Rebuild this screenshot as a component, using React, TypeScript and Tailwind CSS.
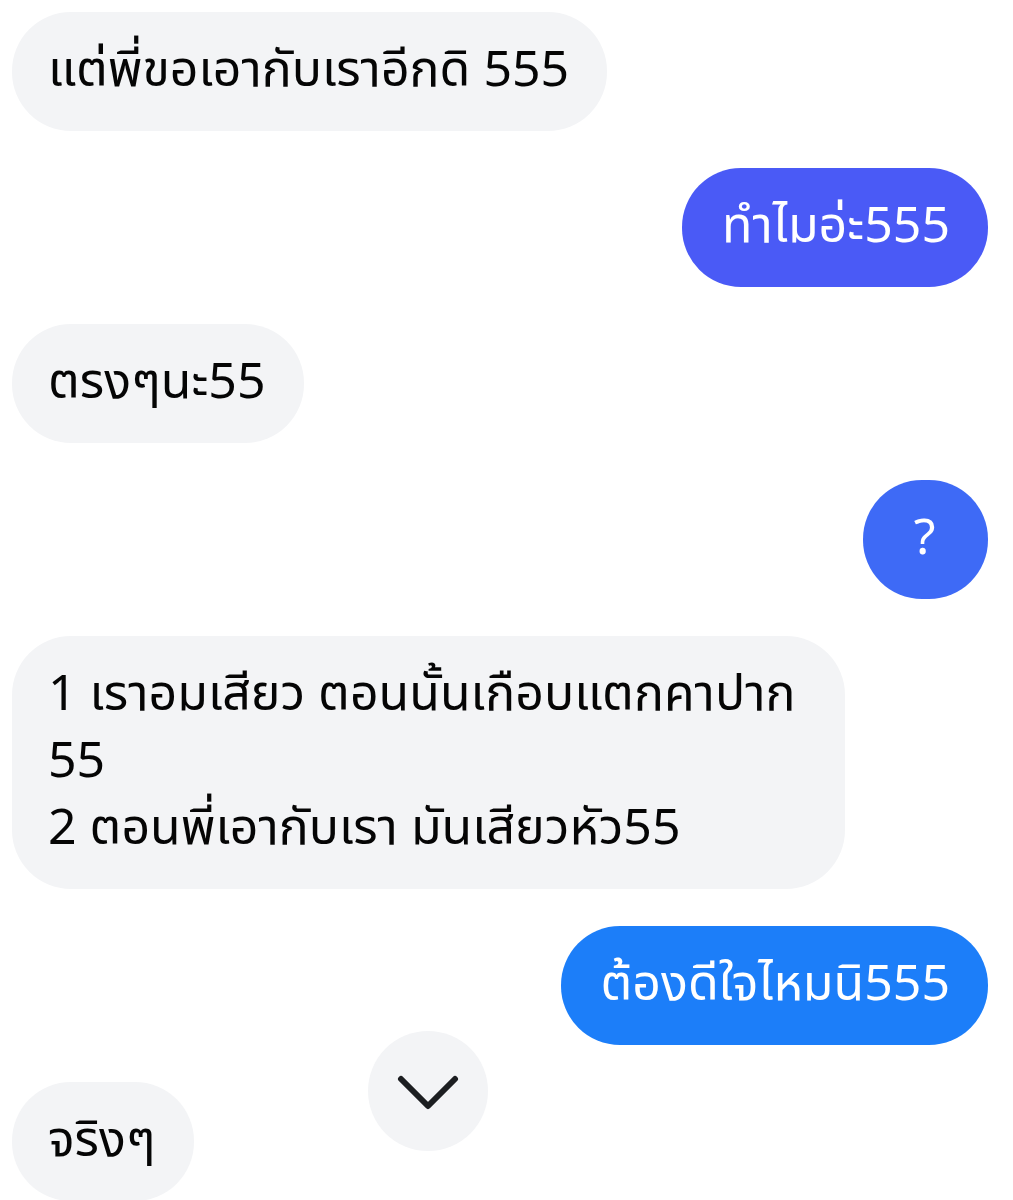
import React from "react";

type Msg = { id: number; me: boolean; lines: string[]; color?: string; extra?: string };

const messages: Msg[] = [
  { id: 1, me: false, lines: ["แต่พี่ขอเอากับเราอีกดิ 555"] },
  { id: 2, me: true, lines: ["ทำไมอ่ะ555"], color: "bg-[#4a5af6]", extra: "pl-[40px]" },
  { id: 3, me: false, lines: ["ตรงๆนะ55"] },
  { id: 4, me: true, lines: ["?"], color: "bg-[#3e6af6]", extra: "w-[125px] items-center text-[44px]" },
  {
    id: 5,
    me: false,
    lines: ["1 เราอมเสียว ตอนนั้นเกือบแตกคาปาก", "55", "2 ตอนพี่เอากับเรา มันเสียวหัว55"],
    extra: "pr-[50px]",
  },
  { id: 6, me: true, lines: ["ต้องดีใจไหมนิ555"], color: "bg-[#1c7ef9]", extra: "pl-[40px]" },
  { id: 7, me: false, lines: ["จริงๆ"] },
];

function Bubble({ m }: { m: Msg }) {
  return (
    <div className={m.me ? "flex justify-end pr-[25px]" : "flex justify-start pl-[12px]"}>
      <div
        className={
          "flex flex-col whitespace-nowrap rounded-[59px] py-[26px] pl-[36px] pr-[38px] text-[50px] leading-[67px] " +
          (m.me ? `${m.color} text-white ` : "bg-[#f3f4f6] text-[#050505] ") +
          (m.extra ?? "")
        }
      >
        {m.lines.map((l, i) => (
          <span key={i}>{l}</span>
        ))}
      </div>
    </div>
  );
}

export default function App() {
  return (
    <div
      className="relative h-[1200px] w-[1013px] overflow-hidden bg-white"
      style={{ fontFamily: '"Noto Sans Thai", Thonburi, Sarabun, Loma, Garuda, "Noto Sans", sans-serif' }}
    >
      <div className="flex flex-col gap-[37px] pt-[12px]">
        {messages.map((m) => (
          <Bubble key={m.id} m={m} />
        ))}
      </div>

      {/* scroll-to-bottom button floats over the thread */}
      <button className="absolute left-[368px] top-[1031px] flex h-[120px] w-[120px] items-center justify-center rounded-full bg-[#f3f4f6]">
        <svg width="64" height="36" viewBox="0 0 64 36" fill="none" className="mt-[4px]">
          <path d="M5 4 L32 31 L59 4" stroke="#1c1e21" strokeWidth="6" strokeLinecap="round" strokeLinejoin="round" />
        </svg>
      </button>
    </div>
  );
}
